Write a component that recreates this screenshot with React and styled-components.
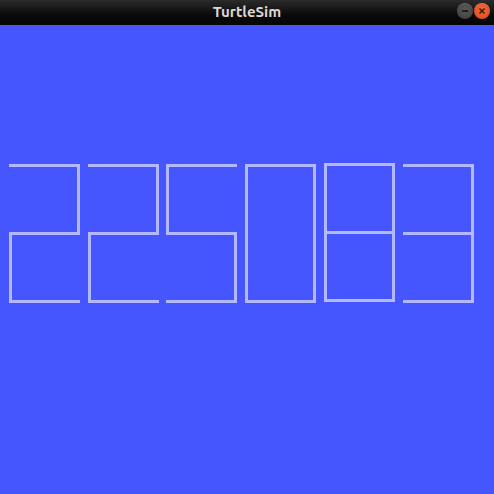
import React from "react";
import styled, { createGlobalStyle } from "styled-components";

const Global = createGlobalStyle`
  html, body { margin: 0; padding: 0; background: #4556ff; }
  body { width: 494px; height: 494px; overflow: hidden; }
`;

const Window = styled.div`
  width: 494px;
  height: 494px;
  display: flex;
  flex-direction: column;
`;

const TitleBar = styled.div`
  height: 25px;
  flex: 0 0 25px;
  background: linear-gradient(#2b2b2b, #0a0a0a 60%, #050505);
  display: flex;
  align-items: center;
  justify-content: center;
  position: relative;
`;

const Title = styled.span`
  font-family: "Ubuntu", "DejaVu Sans", "Noto Sans", sans-serif;
  font-weight: bold;
  font-size: 15px;
  color: #dcd8d0;
  letter-spacing: 0;
  margin-top: -2px;
`;

const Controls = styled.div`
  position: absolute;
  right: 4px;
  top: 3px;
  display: flex;
  gap: 1px;
`;

const CircleButton = styled.div`
  width: 16px;
  height: 16px;
  border-radius: 50%;
  background: ${(p) => p.$bg};
  box-shadow: inset 0 1px 0 rgba(255, 255, 255, 0.15);
  display: flex;
  align-items: center;
  justify-content: center;
`;

const Canvas = styled.div`
  flex: 1;
  background: #4556ff;
  position: relative;
`;

const Drawing = styled.svg`
  display: block;
  width: 494px;
  height: 469px;
`;

const OFF = 25;
const y = (v) => v - OFF;

const digits = [
  // 2
  `M9 ${y(165.5)} H78.5 V${y(233.5)} H10.5 V${y(301.5)} H80`,
  // 2
  `M88 ${y(165.5)} H157.5 V${y(233.5)} H89.5 V${y(301.5)} H159`,
  // 5
  `M237 ${y(165.5)} H167.5 V${y(233.5)} H235.5 V${y(301.5)} H166`,
  // 0
  `M246.5 ${y(165.5)} H314.5 V${y(301.5)} H246.5 Z`,
  // 8
  `M325.5 ${y(164.5)} H393.5 V${y(300.5)} H325.5 Z M325.5 ${y(232.5)} H393.5`,
  // 3
  `M403 ${y(165.5)} H472.5 V${y(301.5)} H403 M403 ${y(233.5)} H472.5`,
];

export default function App() {
  return (
    <>
      <Global />
      <Window>
        <TitleBar>
          <Title>TurtleSim</Title>
          <Controls>
            <CircleButton $bg="radial-gradient(circle at 50% 40%, #5a5a56, #3c3c3a)">
              <svg width="10" height="10" viewBox="0 0 10 10">
                <path d="M2 5 H8" stroke="#1e1e1e" strokeWidth="2" />
              </svg>
            </CircleButton>
            <CircleButton $bg="radial-gradient(circle at 50% 40%, #f26a3c, #d9481a)">
              <svg width="10" height="10" viewBox="0 0 10 10">
                <path d="M2.5 2.5 L7.5 7.5 M7.5 2.5 L2.5 7.5" stroke="#3a1a0c" strokeWidth="1.6" />
              </svg>
            </CircleButton>
          </Controls>
        </TitleBar>
        <Canvas>
          <Drawing viewBox="0 0 494 469">
            {digits.map((d, i) => (
              <path
                key={i}
                d={d}
                fill="none"
                stroke="#b3b8ff"
                strokeWidth="3"
                strokeLinejoin="miter"
                strokeLinecap="butt"
              />
            ))}
          </Drawing>
        </Canvas>
      </Window>
    </>
  );
}
